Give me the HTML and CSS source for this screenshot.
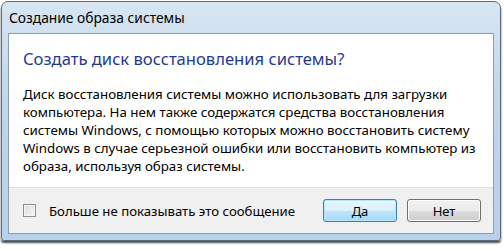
FILE: index.html
```html
<!DOCTYPE html>
<html lang="ru">
<head>
    <meta charset="UTF-8">
    <title>Создание образа системы</title>
    <link rel="stylesheet" href="styles.css">
</head>
<body>
    <div class="window">
        <div class="titlebar">Создание образа системы</div>
        <div class="client">
            <div class="content">
                <h1 class="instruction">Создать диск восстановления системы?</h1>
                <p class="text">
                    Диск восстановления системы можно использовать для загрузки<br>
                    компьютера. На нем также содержатся средства восстановления<br>
                    системы Windows, с помощью которых можно восстановить систему<br>
                    Windows в случае серьезной ошибки или восстановить компьютер из<br>
                    образа, используя образ системы.
                </p>
            </div>
            <div class="footer">
                <label class="check">
                    <span class="box"></span>
                    Больше не показывать это сообщение
                </label>
                <div class="buttons">
                    <button class="btn btn-default">Да</button>
                    <button class="btn">Нет</button>
                </div>
            </div>
        </div>
    </div>
</body>
</html>
```

FILE: styles.css
```css
* {
    margin: 0;
    padding: 0;
    box-sizing: border-box;
}

body {
    font-family: "Noto Sans", "Open Sans", sans-serif;
    background: #ffffff;
    width: 504px;
    height: 250px;
    overflow: hidden;
}

.window {
    margin: 1px 0 0 1px;
    width: 500px;
    height: 240px;
    padding: 0 6px 6px 6px;
    border: 1px solid #5a6b7e;
    border-radius: 7px 7px 3px 3px;
    background: linear-gradient(to bottom, #d8e6f2 0%, #c6d9ec 30%, #bed4ea 60%, #b8d0e9 100%);
    box-shadow: 0 2px 2px rgba(0, 0, 0, 0.7);
    display: flex;
    flex-direction: column;
}

.titlebar {
    height: 31px;
    padding-left: 1px;
    display: flex;
    align-items: center;
    font-size: 13.8px;
    color: #000000;
}

.client {
    flex: 1;
    background: #ffffff;
    border: 1px solid #8b9db2;
    display: flex;
    flex-direction: column;
}

.content {
    flex: 1;
    padding: 13px 14px 0 14px;
}

.instruction {
    font-size: 16.6px;
    font-weight: normal;
    color: #1f3b8f;
    line-height: 24px;
    white-space: nowrap;
}

.text {
    margin-top: 14px;
    font-size: 13.3px;
    line-height: 18px;
    color: #000000;
    white-space: nowrap;
}

.footer {
    height: 46px;
    background: #f0f0f0;
    border-top: 1px solid #dfdfdf;
    display: flex;
    align-items: center;
    justify-content: space-between;
    padding: 0 12px 0 14px;
}

.check {
    display: flex;
    align-items: center;
    gap: 13px;
    font-size: 13.2px;
    color: #000000;
}

.box {
    width: 13px;
    height: 13px;
    border: 1px solid #8f8f8f;
    background: linear-gradient(135deg, #dcdcdc, #f8f8f8);
    box-shadow: inset 0 0 0 1px #f4f4f4;
}

.buttons {
    display: flex;
    gap: 10px;
}

.btn {
    width: 74px;
    height: 23px;
    font-family: inherit;
    font-size: 13px;
    color: #000000;
    border: 1px solid #707070;
    border-radius: 3px;
    background: linear-gradient(to bottom, #f2f2f2 0%, #ebebeb 50%, #dddddd 51%, #cfcfcf 100%);
    box-shadow: inset 0 0 0 1px #fcfcfc;
}

.btn-default {
    border-color: #3c7fb1;
    background: linear-gradient(to bottom, #eaf6fd 0%, #d9f0fc 50%, #bee6fd 51%, #a7d9f5 100%);
    box-shadow: inset 0 0 0 1px #b7e6fb;
}
```
